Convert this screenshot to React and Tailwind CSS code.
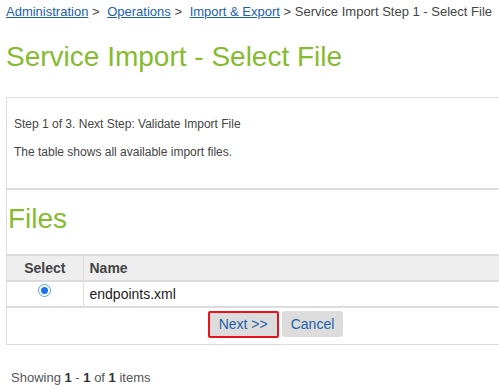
import React from "react";

const ServiceImport = () => {
  return (
    <div className="w-[499px] h-[389px] overflow-hidden bg-white font-['Liberation_Sans',Arial,sans-serif] text-[#444]">
      {/* Breadcrumb */}
      <div className="pl-[6px] pt-[3px] text-[13px] leading-[18px] whitespace-nowrap">
        <a href="#" className="text-[#1d5fa8] underline">Administration</a>
        <span> &gt; </span>
        <a href="#" className="ml-[4px] text-[#1d5fa8] underline">Operations</a>
        <span> &gt; </span>
        <a href="#" className="ml-[4px] text-[#1d5fa8] underline">Import &amp; Export</a>
        <span> &gt; Service Import Step 1 - Select File</span>
      </div>

      {/* Title */}
      <h1 className="pl-[6px] mt-[20px] text-[28px] leading-[32px] text-[#86bb2f] whitespace-nowrap">
        Service Import - Select File
      </h1>

      {/* Main box */}
      <div className="ml-[6px] mt-[24px] w-[520px] border-l border-t border-b border-[#dcdcdc]">
        <div className="pl-[7px] pt-[19px] pb-[29px] border-b-2 border-[#dcdcdc] text-[12px] leading-[14px]">
          <p>Step 1 of 3. Next Step: Validate Import File</p>
          <p className="mt-[14px]">The table shows all available import files.</p>
        </div>

        <h2 className="pl-[1px] pt-[13px] pb-[19px] text-[28px] leading-[32px] text-[#86bb2f]">Files</h2>

        <table className="w-full border-collapse text-[14px]">
          <thead>
            <tr className="bg-[#eeeeee] border-t-2 border-b-2 border-[#dcdcdc]">
              <th className="w-[76px] h-[26px] text-center font-bold text-[#444] border-r border-[#dcdcdc]">Select</th>
              <th className="h-[26px] pl-[6px] text-left font-bold text-[#444]">Name</th>
            </tr>
          </thead>
          <tbody>
            <tr className="border-b-2 border-[#dcdcdc]">
              <td className="h-[26px] text-center align-top border-r border-[#dcdcdc]">
                <span className="inline-block mt-[2px] w-[13px] h-[13px] rounded-full border border-[#5b9cf6] bg-white relative">
                  <span className="absolute left-[2px] top-[2px] w-[7px] h-[7px] rounded-full bg-[#1a73e8]"></span>
                </span>
              </td>
              <td className="h-[26px] pl-[6px] text-[#222]">endpoints.xml</td>
            </tr>
          </tbody>
        </table>

        <div className="w-[499px] flex justify-center gap-[3px] pt-[3px] pb-[6px] pl-[38px]">
          <button className="h-[27px] px-[9px] border-2 border-[#e8131a] bg-[#dcdcdc] rounded-[2px] text-[14px] text-[#1d5fa8]">
            Next &gt;&gt;
          </button>
          <button className="h-[26px] px-[9px] bg-[#dcdcdc] rounded-[3px] text-[14px] text-[#1d5fa8]">
            Cancel
          </button>
        </div>
      </div>

      {/* Pager */}
      <div className="pl-[11px] mt-[25px] text-[13px] leading-[16px] text-[#555]">
        Showing <b className="text-[#333]">1</b> - <b className="text-[#333]">1</b> of <b className="text-[#333]">1</b> items
      </div>
    </div>
  );
};

export default function App() {
  return <ServiceImport />;
}
